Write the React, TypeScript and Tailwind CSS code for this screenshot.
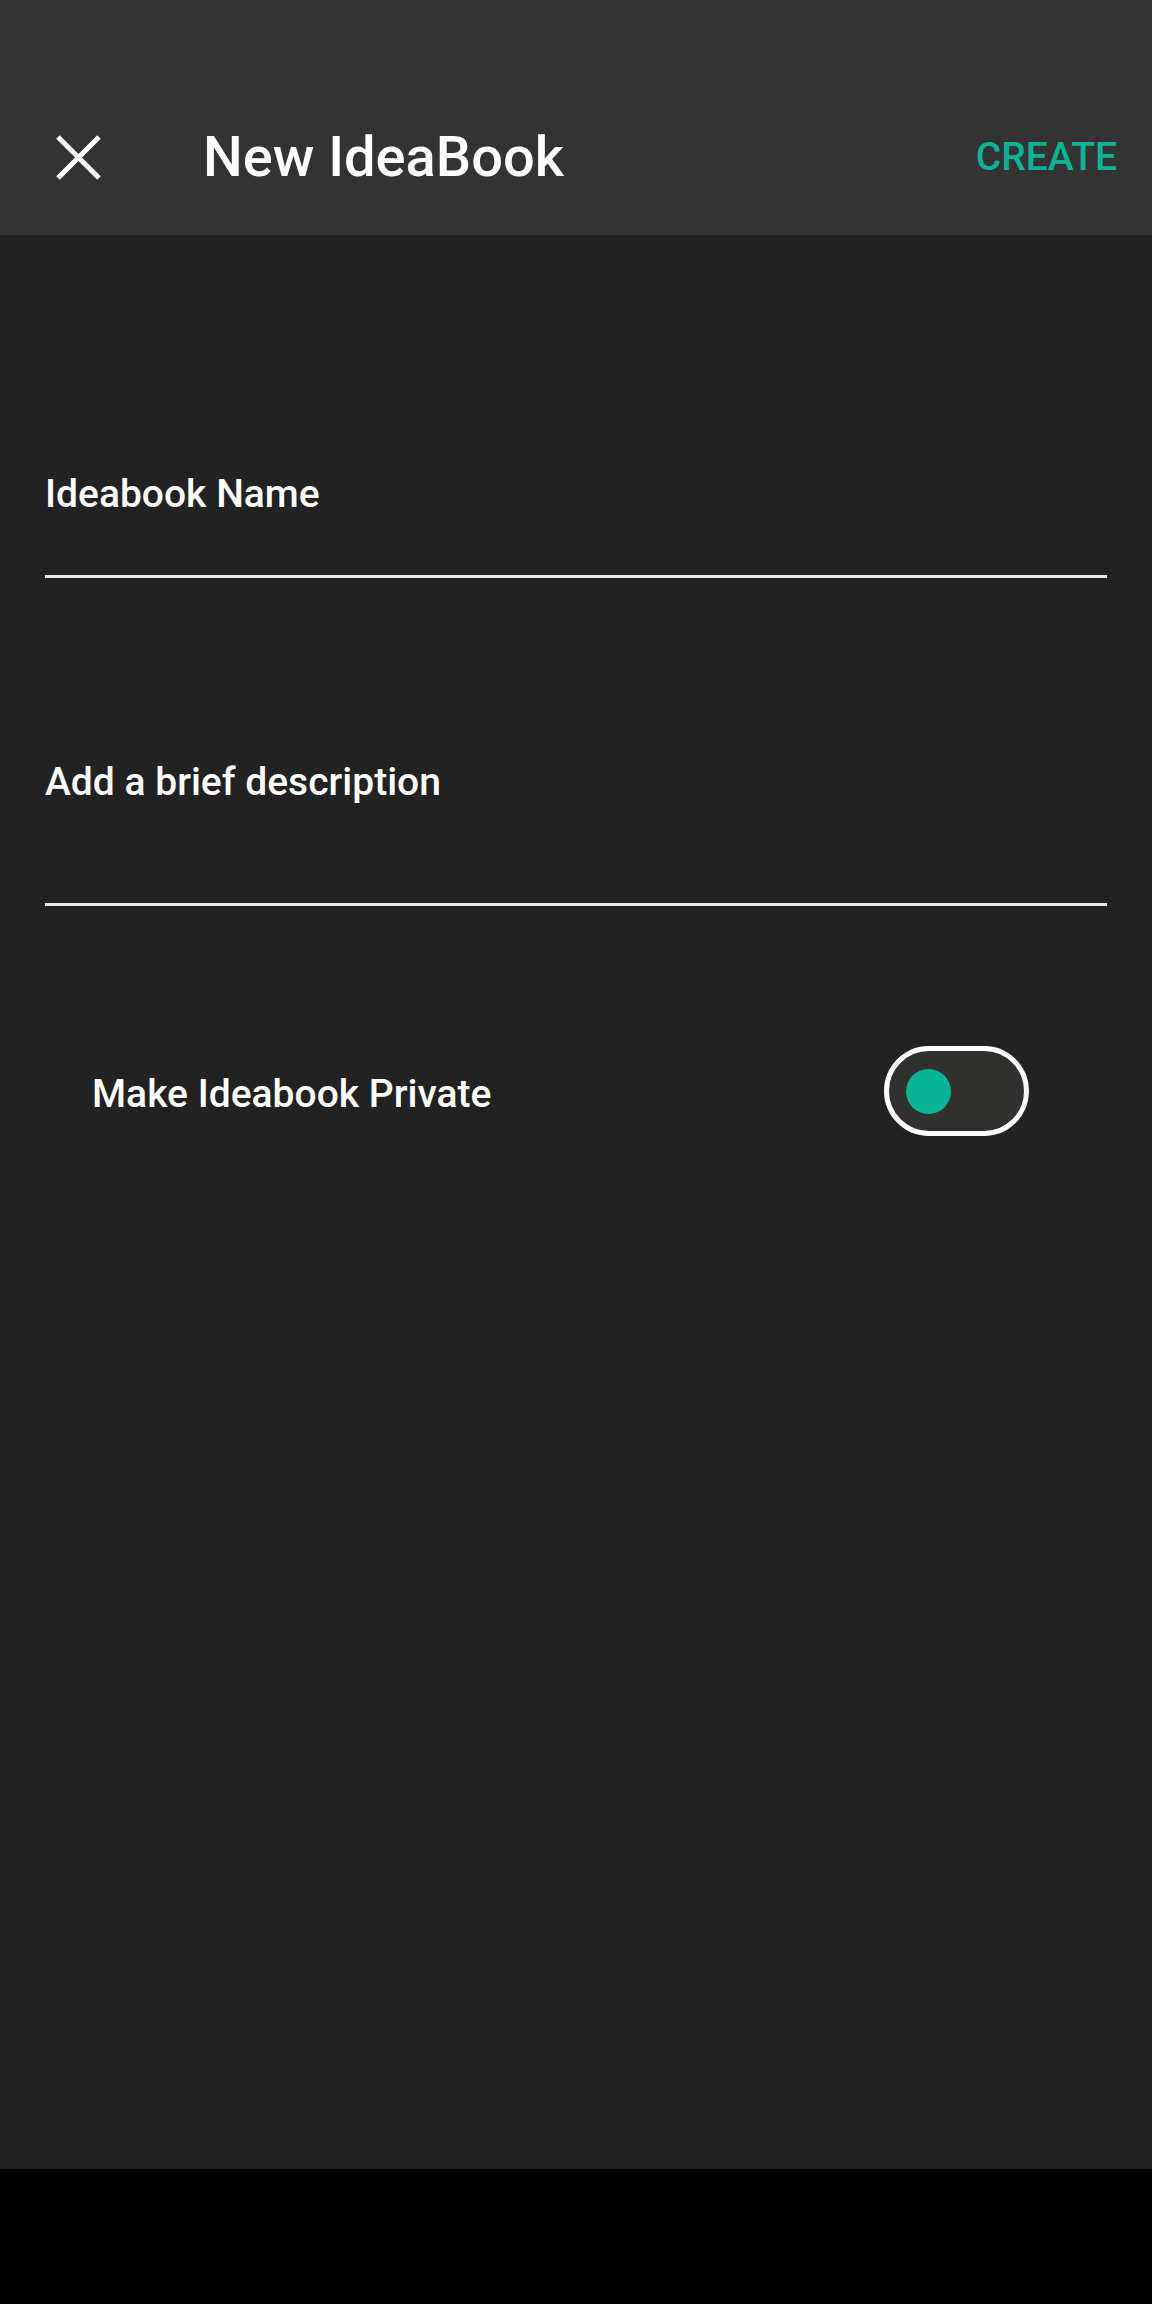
import React from "react";

export default function App() {
  return (
    <div
      className="w-[1152px] h-[2304px] flex flex-col bg-black"
      style={{ fontFamily: "Roboto, 'Noto Sans', sans-serif" }}
    >
      <header className="h-[235px] shrink-0 bg-[#333333] pt-[79px]">
        <div className="h-[156px] flex items-center">
          <div className="ml-[56px] w-[45px] h-[45px] flex items-center justify-center">
            <svg width="45" height="45" viewBox="0 0 45 45">
              <path d="M2 2 L43 43 M43 2 L2 43" stroke="#ffffff" strokeWidth="5" strokeLinecap="butt" />
            </svg>
          </div>
          <h1 className="ml-[102px] text-[56px] leading-none font-medium text-white">New IdeaBook</h1>
          <div className="ml-auto mr-[35px] text-[39px] leading-none font-medium text-[#0bb496]">CREATE</div>
        </div>
      </header>
      <main className="flex-1 bg-[#222222] px-[45px]">
        <div className="mt-[235px] text-[39px] leading-[48px] font-medium text-white">Ideabook Name</div>
        <div className="mt-[57px] h-[3px] bg-[#e8e8e8]" />
        <div className="mt-[180px] text-[39px] leading-[48px] font-medium text-white">Add a brief description</div>
        <div className="mt-[97px] h-[3px] bg-[#e8e8e8]" />
        <div className="mt-[140px] h-[90px] flex items-center pl-[47px] pr-[78px]">
          <span className="text-[39px] leading-[48px] font-medium text-white translate-y-[3px]">Make Ideabook Private</span>
          <div className="ml-auto w-[145px] h-[90px] rounded-full border-[5px] border-white bg-[#30312f] flex items-center pl-[17px]">
            <div className="w-[45px] h-[45px] rounded-full bg-[#07b596]" />
          </div>
        </div>
      </main>
      <div className="h-[135px] shrink-0 bg-black" />
    </div>
  );
}
